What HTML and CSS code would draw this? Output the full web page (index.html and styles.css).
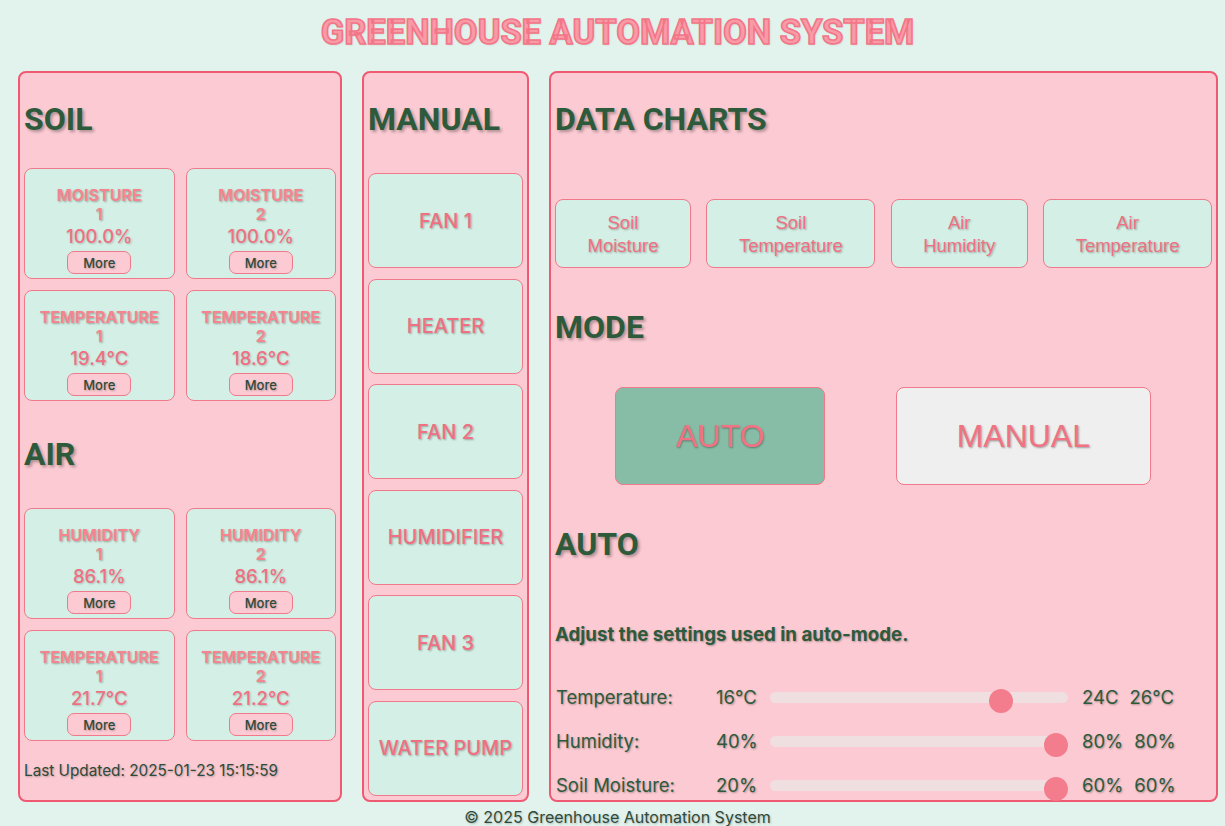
FILE: index.html
```html
<!DOCTYPE html>
<html lang="en">
<head>
<meta charset="utf-8">
<title>Greenhouse Automation System</title>
<link rel="stylesheet" href="styles.css">
</head>
<body>
<h1 class="title">GREENHOUSE AUTOMATION SYSTEM</h1>
<main class="dashboard">
  <section class="panel panel-sensors">
    <h2 class="heading">SOIL</h2>
    <div class="sensor-grid">
      <div class="sensor-card">
        <div class="sensor-name">MOISTURE<br>1</div>
        <div class="sensor-value">100.0%</div>
        <button class="more-btn">More</button>
      </div>
      <div class="sensor-card">
        <div class="sensor-name">MOISTURE<br>2</div>
        <div class="sensor-value">100.0%</div>
        <button class="more-btn">More</button>
      </div>
      <div class="sensor-card">
        <div class="sensor-name">TEMPERATURE<br>1</div>
        <div class="sensor-value">19.4°C</div>
        <button class="more-btn">More</button>
      </div>
      <div class="sensor-card">
        <div class="sensor-name">TEMPERATURE<br>2</div>
        <div class="sensor-value">18.6°C</div>
        <button class="more-btn">More</button>
      </div>
    </div>
    <h2 class="heading heading-air">AIR</h2>
    <div class="sensor-grid sensor-grid-air">
      <div class="sensor-card">
        <div class="sensor-name">HUMIDITY<br>1</div>
        <div class="sensor-value">86.1%</div>
        <button class="more-btn">More</button>
      </div>
      <div class="sensor-card">
        <div class="sensor-name">HUMIDITY<br>2</div>
        <div class="sensor-value">86.1%</div>
        <button class="more-btn">More</button>
      </div>
      <div class="sensor-card">
        <div class="sensor-name">TEMPERATURE<br>1</div>
        <div class="sensor-value">21.7°C</div>
        <button class="more-btn">More</button>
      </div>
      <div class="sensor-card">
        <div class="sensor-name">TEMPERATURE<br>2</div>
        <div class="sensor-value">21.2°C</div>
        <button class="more-btn">More</button>
      </div>
    </div>
    <p class="updated">Last Updated: 2025-01-23 15:15:59</p>
  </section>

  <section class="panel panel-manual">
    <h2 class="heading">MANUAL</h2>
    <div class="device-list">
      <button class="device-btn">FAN 1</button>
      <button class="device-btn">HEATER</button>
      <button class="device-btn">FAN 2</button>
      <button class="device-btn">HUMIDIFIER</button>
      <button class="device-btn">FAN 3</button>
      <button class="device-btn">WATER PUMP</button>
    </div>
  </section>

  <section class="panel panel-control">
    <h2 class="heading">DATA CHARTS</h2>
    <div class="chart-row">
      <button class="chart-btn">Soil Moisture</button>
      <button class="chart-btn">Soil Temperature</button>
      <button class="chart-btn">Air Humidity</button>
      <button class="chart-btn">Air Temperature</button>
    </div>
    <h2 class="heading heading-gap">MODE</h2>
    <div class="mode-row">
      <button class="mode-btn mode-active">AUTO</button>
      <button class="mode-btn">MANUAL</button>
    </div>
    <h2 class="heading heading-gap">AUTO</h2>
    <p class="auto-desc">Adjust the settings used in auto-mode.</p>
    <div class="settings">
      <div class="setting-row">
        <span class="setting-label">Temperature:</span>
        <span class="setting-min">16°C</span>
        <input class="slider" type="range" min="16" max="26" value="24">
        <span class="setting-val">24C</span>
        <span class="setting-max">26°C</span>
      </div>
      <div class="setting-row">
        <span class="setting-label">Humidity:</span>
        <span class="setting-min">40%</span>
        <input class="slider" type="range" min="40" max="80" value="80">
        <span class="setting-val">80%</span>
        <span class="setting-max">80%</span>
      </div>
      <div class="setting-row">
        <span class="setting-label">Soil Moisture:</span>
        <span class="setting-min">20%</span>
        <input class="slider" type="range" min="20" max="60" value="60">
        <span class="setting-val">60%</span>
        <span class="setting-max">60%</span>
      </div>
    </div>
  </section>
</main>
<footer class="footer">© 2025 Greenhouse Automation System</footer>
</body>
</html>
```

FILE: styles.css
```css
* {
  box-sizing: border-box;
}

html, body {
  margin: 0;
  padding: 0;
}

body {
  background: #e2f3ed;
  font-family: Inter, "Noto Sans", sans-serif;
  color: #2e5a3c;
  width: 1225px;
  height: 826px;
  overflow: hidden;
}

.title {
  margin: 13px 0 0 10px;
  font-family: Roboto, "Liberation Sans", sans-serif;
  font-weight: 700;
  font-size: 34.5px;
  line-height: 38px;
  text-align: center;
  color: #f99ba7;
  -webkit-text-stroke: 1.6px #f37588;
  text-shadow: 1px 1px 2px rgba(0, 0, 0, 0.15);
}

.dashboard {
  display: grid;
  grid-template-columns: 324px 167px 669px;
  grid-template-rows: 731px;
  column-gap: 20px;
  height: 731px;
  margin: 20px 7px 0 18px;
}

.panel {
  background: #fbcad2;
  border: 2px solid #ef5a72;
  border-radius: 8px;
  padding: 0 4px;
  min-width: 0;
}

.heading {
  margin: 28px 0 0;
  font-family: Roboto, "Liberation Sans", sans-serif;
  font-weight: 700;
  font-size: 32px;
  line-height: 37px;
  color: #2e5a3c;
  text-shadow: 2px 2px 3px rgba(0, 0, 0, 0.3);
}

.heading-air {
  margin-top: 35px;
}

.heading-gap {
  margin-top: 41px;
}

/* sensor cards */
.sensor-grid {
  display: grid;
  grid-template-columns: 1fr 1fr;
  gap: 11px;
  margin-top: 30px;
}

.sensor-grid-air {
  margin-top: 35px;
}

.sensor-card {
  height: 111px;
  background: #d4efe5;
  border: 1px solid #f0798b;
  border-radius: 8px;
  padding-top: 17px;
  display: flex;
  flex-direction: column;
  align-items: center;
  text-align: center;
}

.sensor-name {
  font-weight: 700;
  font-size: 16px;
  line-height: 19px;
  color: #f4858f;
  text-shadow: 1px 1px 2px rgba(0, 0, 0, 0.3);
}

.sensor-value {
  font-weight: 500;
  font-size: 18.5px;
  line-height: 24px;
  color: #ef7083;
  text-shadow: 1px 1px 2px rgba(0, 0, 0, 0.2);
}

.more-btn {
  margin-top: 3px;
  width: 64px;
  height: 23px;
  padding: 0;
  background: #fbcad2;
  border: 1px solid #f0798b;
  border-radius: 7px;
  font-family: Inter, "Noto Sans", sans-serif;
  font-weight: 500;
  font-size: 13px;
  color: #2e4a3a;
  text-shadow: 1px 1px 2px rgba(0, 0, 0, 0.25);
}

.updated {
  margin: 21px 0 0;
  font-size: 15.3px;
  line-height: 18px;
  color: #2e4a3a;
  text-shadow: 1px 1px 2px rgba(0, 0, 0, 0.25);
}

/* manual devices */
.device-list {
  display: flex;
  flex-direction: column;
  gap: 10.6px;
  margin-top: 35px;
}

.device-btn {
  height: 95px;
  width: 100%;
  background: #d4efe5;
  border: 1px solid #f0798b;
  border-radius: 8px;
  font-family: Inter, "Noto Sans", sans-serif;
  font-weight: 500;
  font-size: 20px;
  color: #ef7083;
  text-shadow: 1px 1px 2px rgba(0, 0, 0, 0.3);
  padding: 0;
}

/* charts */
.chart-row {
  display: flex;
  justify-content: space-between;
  margin-top: 61px;
}

.chart-btn {
  width: min-content;
  height: 69px;
  padding: 0 31.5px;
  background: #d4efe5;
  border: 1px solid #f0798b;
  border-radius: 8px;
  font-family: "Liberation Sans", Arial, sans-serif;
  font-size: 18.5px;
  line-height: 23px;
  color: #ef7083;
  text-shadow: 1px 1px 2px rgba(0, 0, 0, 0.3);
}

/* mode */
.mode-row {
  display: flex;
  justify-content: space-between;
  padding: 0 61px 0 60px;
  margin-top: 41px;
}

.mode-btn {
  height: 98px;
  padding: 0 60px;
  background: #efefef;
  border: 1px solid #f0798b;
  border-radius: 8px;
  font-family: "Liberation Sans", Arial, sans-serif;
  font-size: 32px;
  color: #f07283;
  text-shadow: 1px 1px 2px rgba(0, 0, 0, 0.35);
}

.mode-active {
  background: #87bda7;
}

/* auto settings */
.auto-desc {
  margin: 61px 0 0;
  font-weight: 700;
  font-size: 18.7px;
  line-height: 21px;
  color: #2e5a3c;
  text-shadow: 1px 1px 2px rgba(0, 0, 0, 0.3);
}

.settings {
  margin-top: 30px;
  padding-left: 1px;
}

.setting-row {
  display: flex;
  align-items: center;
  height: 44px;
  font-size: 18.5px;
  color: #2e5a3c;
  text-shadow: 1px 1px 2px rgba(0, 0, 0, 0.3);
}

.setting-label {
  width: 160px;
  flex: none;
}

.setting-min {
  width: 54px;
  flex: none;
}

.setting-val {
  margin-left: 14px;
}

.setting-max {
  margin-left: 11px;
}

.slider {
  -webkit-appearance: none;
  appearance: none;
  width: 298px;
  height: 11px;
  margin: 0;
  background: transparent;
  flex: none;
}

.slider::-webkit-slider-runnable-track {
  height: 11px;
  background: #efdfe0;
  border-radius: 6px;
}

.slider::-webkit-slider-thumb {
  -webkit-appearance: none;
  appearance: none;
  width: 24px;
  height: 24px;
  margin-top: -2.5px;
  border-radius: 50%;
  background: #f37d8d;
  border: none;
}

.footer {
  margin: 6px 0 0 10px;
  text-align: center;
  font-size: 16px;
  line-height: 18px;
  color: #2e4a3a;
  text-shadow: 1px 1px 2px rgba(0, 0, 0, 0.25);
}
```
